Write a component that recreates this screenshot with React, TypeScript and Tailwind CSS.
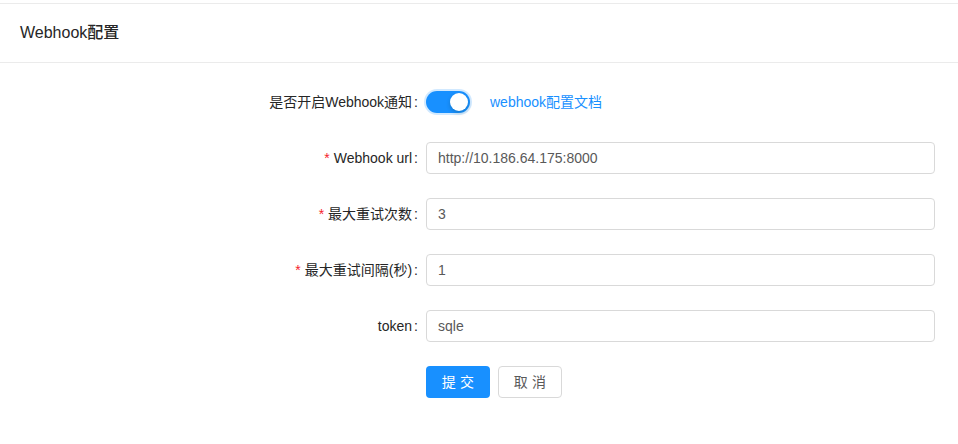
import React from "react";

const font = { fontFamily: '"Liberation Sans", "Noto Sans CJK SC", sans-serif' };

function Label({ text, required }: { text: string; required?: boolean }) {
  return (
    <div className="w-[426px] shrink-0 flex justify-end items-center text-[14px] text-[#262626]">
      {required && <span className="text-[#f5222d] mr-[4px] text-[14px]">*</span>}
      <span>{text}</span>
      <span className="ml-[2px] mr-[8px]">:</span>
    </div>
  );
}

function Field({ label, value, required }: { label: string; value: string; required?: boolean }) {
  return (
    <div className="flex h-[32px] mb-[24px]">
      <Label text={label} required={required} />
      <input
        readOnly
        value={value}
        className="w-[509px] h-[32px] border border-[#d9d9d9] rounded-[4px] px-[11px] text-[14px] text-[#595959] outline-none bg-white"
        style={font}
      />
    </div>
  );
}

export default function App() {
  return (
    <div className="w-[958px] h-[444px] bg-white overflow-hidden" style={font}>
      <div className="mt-[3px] border-t border-[#ebebeb]">
        <div className="h-[59px] border-b border-[#ebebeb] flex items-center px-[20px] text-[16px] font-medium text-[#262626]">
          Webhook配置
        </div>
        <div className="pt-[23px]">
          <div className="flex h-[32px] mb-[24px] items-center">
            <Label text="是否开启Webhook通知" />
            <div className="w-[44px] h-[22px] rounded-full bg-[#1890ff] relative shadow-[0_0_0_2px_rgba(24,144,255,0.2)]">
              <div className="absolute top-[2px] right-[2px] w-[18px] h-[18px] rounded-full bg-white shadow-[0_2px_4px_rgba(0,35,11,0.2)]" />
            </div>
            <span className="ml-[20px] text-[14px] text-[#1890ff]">webhook配置文档</span>
          </div>
          <Field label="Webhook url" value="http://10.186.64.175:8000" required />
          <Field label="最大重试次数" value="3" required />
          <Field label="最大重试间隔(秒)" value="1" required />
          <Field label="token" value="sqle" />
          <div className="flex h-[32px]">
            <div className="w-[426px] shrink-0" />
            <button className="w-[64px] h-[32px] rounded-[4px] bg-[#1890ff] text-white text-[14px] tracking-[0.3em] pl-[4px]" style={font}>
              提交
            </button>
            <button className="ml-[8px] w-[64px] h-[32px] rounded-[4px] border border-[#d9d9d9] bg-white text-[#595959] text-[14px] tracking-[0.3em] pl-[4px]" style={font}>
              取消
            </button>
          </div>
        </div>
      </div>
    </div>
  );
}
